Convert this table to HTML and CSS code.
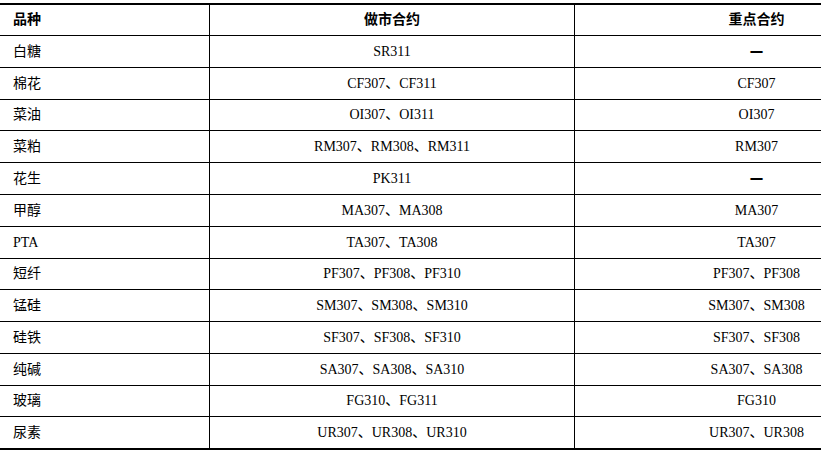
FILE: index.html
```html
<!DOCTYPE html>
<html lang="zh-CN">
<head>
<meta charset="utf-8">
<title>做市合约</title>
<link rel="stylesheet" href="styles.css">
</head>
<body>
<div class="frame">
<table class="contracts">
  <thead>
    <tr><th class="c1">品种</th><th class="c2">做市合约</th><th class="c3">重点合约</th></tr>
  </thead>
  <tbody>
    <tr><td class="c1">白糖</td><td class="c2">SR311</td><td class="c3"><span class="dash">—</span></td></tr>
    <tr><td class="c1">棉花</td><td class="c2">CF307、CF311</td><td class="c3">CF307</td></tr>
    <tr class="short"><td class="c1">菜油</td><td class="c2">OI307、OI311</td><td class="c3">OI307</td></tr>
    <tr><td class="c1">菜粕</td><td class="c2">RM307、RM308、RM311</td><td class="c3">RM307</td></tr>
    <tr><td class="c1">花生</td><td class="c2">PK311</td><td class="c3"><span class="dash">—</span></td></tr>
    <tr><td class="c1">甲醇</td><td class="c2">MA307、MA308</td><td class="c3">MA307</td></tr>
    <tr><td class="c1">PTA</td><td class="c2">TA307、TA308</td><td class="c3">TA307</td></tr>
    <tr class="short"><td class="c1">短纤</td><td class="c2">PF307、PF308、PF310</td><td class="c3">PF307、PF308</td></tr>
    <tr><td class="c1">锰硅</td><td class="c2">SM307、SM308、SM310</td><td class="c3">SM307、SM308</td></tr>
    <tr><td class="c1">硅铁</td><td class="c2">SF307、SF308、SF310</td><td class="c3">SF307、SF308</td></tr>
    <tr><td class="c1">纯碱</td><td class="c2">SA307、SA308、SA310</td><td class="c3">SA307、SA308</td></tr>
    <tr class="short"><td class="c1">玻璃</td><td class="c2">FG310、FG311</td><td class="c3">FG310</td></tr>
    <tr class="last"><td class="c1">尿素</td><td class="c2">UR307、UR308、UR310</td><td class="c3">UR307、UR308</td></tr>
  </tbody>
</table>
</div>
</body>
</html>
```

FILE: styles.css
```css
html, body {
  margin: 0;
  padding: 0;
  background: #ffffff;
}

.frame {
  width: 821px;
  height: 452px;
  overflow: hidden;
  padding-top: 3px;
  box-sizing: border-box;
}

.contracts {
  width: 938px;
  border-collapse: separate;
  border-spacing: 0;
  table-layout: fixed;
  font-family: "Liberation Serif", "Noto Sans CJK SC", serif;
  font-size: 14px;
  color: #000000;
}

.contracts th,
.contracts td {
  box-sizing: border-box;
  padding: 0;
  vertical-align: middle;
  border-bottom: 1px solid #000000;
  line-height: 16px;
  white-space: nowrap;
}

.contracts th {
  height: 33px;
  border-top: 2px solid #000000;
  font-weight: bold;
}

.contracts td {
  height: 32px;
}

.contracts tr.short td {
  height: 31px;
}

.contracts tr.last td {
  height: 33px;
  border-bottom: 2px solid #000000;
}

.c1 {
  width: 210px;
  text-align: left;
  padding-left: 13px !important;
  border-right: 1px solid #000000;
}

.c2 {
  width: 365px;
  text-align: center;
  border-right: 1px solid #000000;
}

.c3 {
  width: 363px;
  text-align: center;
}

.dash {
  font-family: "Liberation Serif", serif;
  font-size: 12px;
  font-weight: bold;
  vertical-align: 3px;
  text-shadow: 0 0.5px 0 #000000;
}
```
